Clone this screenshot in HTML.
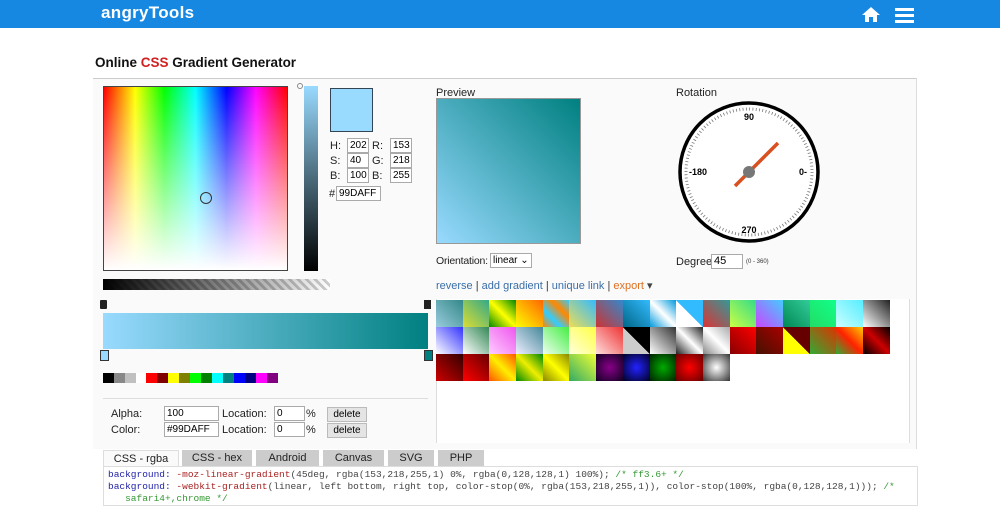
<!DOCTYPE html><html><head><style>
body{margin:0;width:1000px;height:500px;overflow:hidden;background:#fff;font-family:"Liberation Sans",sans-serif;position:relative}
.a{position:absolute}
.in{position:absolute;border:1px solid #aaa;background:#fff;font-size:10px;line-height:13px;height:13px;padding-left:2px;box-sizing:content-box;overflow:hidden;white-space:nowrap}
.l{position:absolute;font-size:11px;color:#222}
.btn{position:absolute;background:#e4e4e4;border:1px solid #bbb;font-size:10px;text-align:center;line-height:13px;height:13px;width:38px}
.tab{position:absolute;top:450px;height:16px;background:#ccc;font-size:11px;text-align:center;line-height:16px;color:#222}
</style></head><body>
<div class="a" style="left:0;top:0;width:1000px;height:28px;background:#1688e2"></div>
<div class="a" style="left:101px;top:3px;color:#fff;font-weight:bold;font-size:17px;letter-spacing:0.3px">angryTools</div>
<svg class="a" style="left:861px;top:6px" width="20" height="17" viewBox="0 0 20 17"><path d="M10 1L1 9h3v7h4v-5h4v5h4V9h3z" fill="#fff"/></svg>
<div class="a" style="left:895px;top:8px;width:19px;height:3px;background:#fff;box-shadow:0 6px 0 #fff,0 12px 0 #fff"></div>
<div class="a" style="left:95px;top:55px;font-size:13.5px;font-weight:bold;color:#111">Online <span style="color:#d02020">CSS</span> Gradient Generator</div>
<div class="a" style="left:93px;top:78px;width:823px;height:370px;border-top:1px solid #ccc;border-right:1px solid #ddd;background:#fafafa"></div>
<div class="a" style="left:103px;top:86px;width:185px;height:185px;background:linear-gradient(to bottom,rgba(255,255,255,0),#fff),linear-gradient(to right,red,#ff0 17%,lime 33%,cyan 50%,blue 67%,#f0f 83%,red);border:1px solid #444;box-sizing:border-box"></div>
<div class="a" style="left:200px;top:192px;width:10px;height:10px;border:1px solid #333;border-radius:50%"></div>
<div class="a" style="left:304px;top:86px;width:14px;height:185px;background:linear-gradient(#99daff,#4a6a7a 50%,#000)"></div>
<div class="a" style="left:297px;top:83px;width:4px;height:4px;border:1px solid #888;border-radius:50%"></div>
<div class="a" style="left:330px;top:88px;width:41px;height:42px;background:#99daff;border:1px solid #345"></div>
<div class="l" style="left:330px;top:140px">H:</div><div class="in" style="left:347px;top:138px;width:18px">202</div>
<div class="l" style="left:372px;top:140px">R:</div><div class="in" style="left:390px;top:138px;width:18px">153</div>
<div class="l" style="left:330px;top:155px">S:</div><div class="in" style="left:347px;top:153px;width:18px">40</div>
<div class="l" style="left:372px;top:155px">G:</div><div class="in" style="left:390px;top:153px;width:18px">218</div>
<div class="l" style="left:330px;top:170px">B:</div><div class="in" style="left:347px;top:168px;width:18px">100</div>
<div class="l" style="left:372px;top:170px">B:</div><div class="in" style="left:390px;top:168px;width:18px">255</div>
<div class="l" style="left:329px;top:188px">#</div><div class="in" style="left:336px;top:186px;width:41px">99DAFF</div>
<div class="a" style="left:103px;top:279px;width:227px;height:11px;background:linear-gradient(to right,#000,rgba(0,0,0,0)),repeating-linear-gradient(45deg,#ccc 0 3px,#fff 3px 6px)"></div>
<div class="a" style="left:100px;top:300px;width:7px;height:9px;background:#222;border-radius:1px"></div>
<div class="a" style="left:424px;top:300px;width:7px;height:9px;background:#222"></div>
<div class="a" style="left:103px;top:313px;width:325px;height:36px;background:linear-gradient(to right,#99daff,#008080)"></div>
<div class="a" style="left:100px;top:350px;width:7px;height:9px;background:#99daff;border:1px solid #333"></div>
<div class="a" style="left:424px;top:350px;width:7px;height:9px;background:#008080;border:1px solid #333"></div>
<div class="a" style="left:103px;top:373px;height:10px;display:flex">
<i style="width:11px;background:#000"></i><i style="width:11px;background:#888"></i><i style="width:11px;background:#c0c0c0"></i><i style="width:10px;background:#fff"></i>
<i style="width:11px;background:red"></i><i style="width:11px;background:#800000"></i><i style="width:11px;background:#ff0"></i><i style="width:11px;background:#808000"></i><i style="width:11px;background:lime"></i><i style="width:11px;background:green"></i><i style="width:11px;background:cyan"></i><i style="width:11px;background:teal"></i><i style="width:11px;background:blue"></i><i style="width:11px;background:navy"></i><i style="width:11px;background:#f0f"></i><i style="width:11px;background:purple"></i></div>
<div class="a" style="left:103px;top:398px;width:325px;height:43px;border-top:1px solid #ddd;background:#fafafa"></div>
<div class="l" style="left:111px;top:408px">Alpha:</div><div class="in" style="left:164px;top:406px;width:51px">100</div>
<div class="l" style="left:222px;top:408px">Location:</div><div class="in" style="left:274px;top:406px;width:27px">0</div><div class="l" style="left:306px;top:408px">%</div><div class="btn" style="left:327px;top:407px">delete</div>
<div class="l" style="left:111px;top:424px">Color:</div><div class="in" style="left:164px;top:422px;width:51px">#99DAFF</div>
<div class="l" style="left:222px;top:424px">Location:</div><div class="in" style="left:274px;top:422px;width:27px">0</div><div class="l" style="left:306px;top:424px">%</div><div class="btn" style="left:327px;top:423px">delete</div>
<div class="tab" style="left:103px;width:74px;background:#fafafa;border:1px solid #ddd;border-bottom:none">CSS - rgba</div>
<div class="tab" style="left:182px;width:70px">CSS - hex</div>
<div class="tab" style="left:256px;width:63px">Android</div>
<div class="tab" style="left:323px;width:61px">Canvas</div>
<div class="tab" style="left:388px;width:46px">SVG</div>
<div class="tab" style="left:438px;width:46px">PHP</div>
<div class="a" style="left:103px;top:466px;width:805px;height:34px;background:#fff;border:1px solid #ddd;font-family:'Liberation Mono',monospace;font-size:9.5px;line-height:12px;padding:2px 4px;color:#a22">
<span style="color:#22a">background:</span> -moz-linear-gradient<span style="color:#444">(45deg, rgba(153,218,255,1) 0%, rgba(0,128,128,1) 100%);</span> <span style="color:#393">/* ff3.6+ */</span><br>
<span style="color:#22a">background:</span> -webkit-gradient<span style="color:#444">(linear, left bottom, right top, color-stop(0%, rgba(153,218,255,1)), color-stop(100%, rgba(0,128,128,1)));</span> <span style="color:#393">/*</span><br><span style="color:#393">&nbsp;&nbsp;&nbsp;safari4+,chrome */</span></div>
<div class="l" style="left:436px;top:87px">Preview</div>
<div class="a" style="left:436px;top:98px;width:143px;height:144px;background:linear-gradient(45deg,#99daff,#008080);border:1px solid #999"></div>
<div class="l" style="left:436px;top:255px;font-size:10.5px;letter-spacing:-0.2px">Orientation:</div><div class="in" style="left:490px;top:253px;width:38px;font-size:10px">linear ⌄</div>
<div class="a" style="left:436px;top:279px;font-size:11px;color:#3a6fa8">reverse <span style="color:#333">|</span> add gradient <span style="color:#333">|</span> unique link <span style="color:#333">|</span> <span style="color:#e07020">export</span> <span style="color:#444">▾</span></div>
<div class="a" style="left:436px;top:299px;width:472px;height:144px;background:#fff;border-left:1px solid #ddd;border-right:1px solid #ddd"></div>
<div class="a" style="left:436px;top:300px;width:455px;display:flex;flex-wrap:wrap">
<i style="width:26.7px;height:27px;background:linear-gradient(45deg,#9cd,#388)"></i><i style="width:26.7px;height:27px;background:linear-gradient(45deg,#dd3,#3a8)"></i><i style="width:26.7px;height:27px;background:linear-gradient(45deg,#080,#ff0,#080)"></i><i style="width:26.7px;height:27px;background:linear-gradient(45deg,#ff0,#f60)"></i><i style="width:26.7px;height:27px;background:linear-gradient(45deg,#f80,#3cf,#f80,#3cf)"></i><i style="width:26.7px;height:27px;background:linear-gradient(45deg,#ed5,#3bf)"></i><i style="width:26.7px;height:27px;background:linear-gradient(45deg,#c33,#38c)"></i><i style="width:26.7px;height:27px;background:linear-gradient(45deg,#068,#3bf)"></i><i style="width:26.7px;height:27px;background:linear-gradient(45deg,#09d,#fff,#09d)"></i><i style="width:26.7px;height:27px;background:linear-gradient(45deg,#fff 50%,#3bf 50%)"></i><i style="width:26.7px;height:27px;background:linear-gradient(45deg,#d33,#399)"></i><i style="width:26.7px;height:27px;background:linear-gradient(45deg,#cf4,#3d8)"></i><i style="width:26.7px;height:27px;background:linear-gradient(45deg,#c4f,#4cf)"></i><i style="width:26.7px;height:27px;background:linear-gradient(45deg,#085,#3c9)"></i><i style="width:26.7px;height:27px;background:linear-gradient(45deg,#2d6,#1f8)"></i><i style="width:26.7px;height:27px;background:linear-gradient(45deg,#cff,#5ef)"></i><i style="width:26.7px;height:27px;background:linear-gradient(45deg,#fff,#222)"></i>
<i style="width:26.7px;height:27px;background:linear-gradient(45deg,#fff,#33f)"></i><i style="width:26.7px;height:27px;background:linear-gradient(45deg,#fff,#385)"></i><i style="width:26.7px;height:27px;background:linear-gradient(45deg,#fcf,#e5e)"></i><i style="width:26.7px;height:27px;background:linear-gradient(45deg,#eef,#489)"></i><i style="width:26.7px;height:27px;background:linear-gradient(45deg,#efe,#4e4)"></i><i style="width:26.7px;height:27px;background:linear-gradient(45deg,#ffd,#ff4)"></i><i style="width:26.7px;height:27px;background:linear-gradient(45deg,#fdd,#e33)"></i><i style="width:26.7px;height:27px;background:linear-gradient(45deg,#ccc 50%,#000 50%)"></i><i style="width:26.7px;height:27px;background:linear-gradient(45deg,#fff,#333)"></i><i style="width:26.7px;height:27px;background:linear-gradient(45deg,#222,#fff,#222)"></i><i style="width:26.7px;height:27px;background:linear-gradient(45deg,#888,#fff,#aaa)"></i><i style="width:26.7px;height:27px;background:linear-gradient(45deg,#800,#f00)"></i><i style="width:26.7px;height:27px;background:linear-gradient(45deg,#410,#a00)"></i><i style="width:26.7px;height:27px;background:linear-gradient(45deg,#ff0 50%,#600 50%)"></i><i style="width:26.7px;height:27px;background:linear-gradient(45deg,#3a3,#d30)"></i><i style="width:26.7px;height:27px;background:linear-gradient(45deg,#3a3,#f20,#fc0)"></i><i style="width:26.7px;height:27px;background:linear-gradient(45deg,#000,#c00,#000)"></i>
<i style="width:26.7px;height:27px;background:linear-gradient(45deg,#c00,#300)"></i><i style="width:26.7px;height:27px;background:linear-gradient(45deg,#f00,#600)"></i><i style="width:26.7px;height:27px;background:linear-gradient(45deg,#f50,#fe0,#f50)"></i><i style="width:26.7px;height:27px;background:linear-gradient(45deg,#080,#ee0,#080)"></i><i style="width:26.7px;height:27px;background:linear-gradient(45deg,#880,#ff0,#880)"></i><i style="width:26.7px;height:27px;background:linear-gradient(45deg,#3a6,#ef3)"></i><i style="width:26.7px;height:27px;background:radial-gradient(#808,#102)"></i><i style="width:26.7px;height:27px;background:radial-gradient(#22f,#002)"></i><i style="width:26.7px;height:27px;background:radial-gradient(#0a0,#020)"></i><i style="width:26.7px;height:27px;background:radial-gradient(#f00,#600)"></i><i style="width:26.7px;height:27px;background:radial-gradient(#fff,#333)"></i></div>
<div class="l" style="left:676px;top:87px">Rotation</div>
<svg class="a" style="left:677px;top:100px" width="144" height="144" viewBox="-72 -72 144 144">
<circle r="69" fill="#fff" stroke="#000" stroke-width="3.5"/>
<circle r="63" fill="none" stroke="#777" stroke-width="3" stroke-dasharray="0.8 2.5"/>
<text y="-52" text-anchor="middle" font-size="9" font-weight="bold" font-family="Liberation Sans">90</text>
<text y="61" text-anchor="middle" font-size="9" font-weight="bold" font-family="Liberation Sans">270</text>
<text x="-60" y="3" font-size="9" font-weight="bold" font-family="Liberation Sans">-180</text>
<text x="50" y="3" font-size="9" font-weight="bold" font-family="Liberation Sans">0-</text>
<line x1="-14" y1="14" x2="29" y2="-29" stroke="#d85020" stroke-width="3.5"/>
<circle r="6" fill="#777"/>
</svg>
<div class="a" style="left:676px;top:256px;font-size:11px;color:#222">Degree</div>
<div class="in" style="left:711px;top:254px;width:28px;font-size:11px">45</div>
<div class="a" style="left:746px;top:259px;font-size:6px;color:#333">(0 - 360)</div>
</body></html>
